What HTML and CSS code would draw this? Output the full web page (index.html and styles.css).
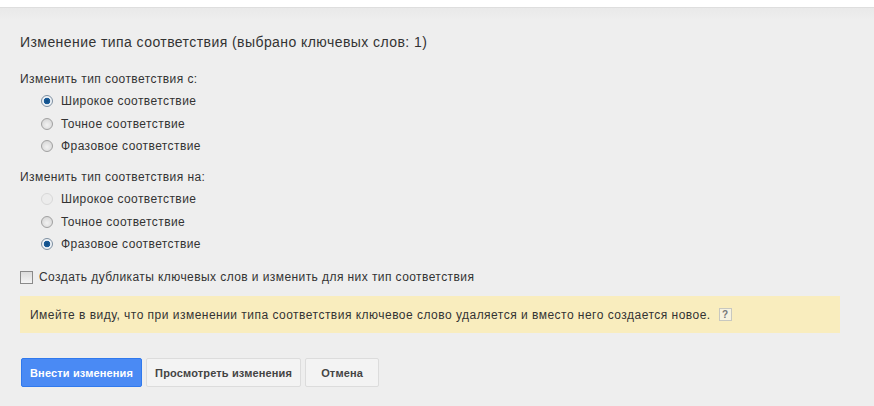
FILE: index.html
```html
<!DOCTYPE html>
<html>
  <head>
    <meta charset="utf-8">
    <title>Изменение типа соответствия</title>
    <link rel="stylesheet" href="styles.css">
  </head>
  <body>
    <div class="topbar"></div>
    <div class="panel">
      <h1 class="title">Изменение типа соответствия (выбрано ключевых слов: 1)</h1>

      <div class="group-label">Изменить тип соответствия с:</div>
      <div class="options">
        <label class="option"><span class="radio checked"></span>Широкое соответствие</label>
        <label class="option"><span class="radio"></span>Точное соответствие</label>
        <label class="option"><span class="radio"></span>Фразовое соответствие</label>
      </div>

      <div class="group-label">Изменить тип соответствия на:</div>
      <div class="options">
        <label class="option"><span class="radio disabled"></span>Широкое соответствие</label>
        <label class="option"><span class="radio"></span>Точное соответствие</label>
        <label class="option"><span class="radio checked"></span>Фразовое соответствие</label>
      </div>

      <label class="duplicate"><span class="checkbox"></span>Создать дубликаты ключевых слов и изменить для них тип соответствия</label>

      <div class="notice">Имейте в виду, что при изменении типа соответствия ключевое слово удаляется и вместо него создается новое.<span class="help">?</span></div>

      <div class="buttons">
        <button type="button" class="button primary">Внести изменения</button>
        <button type="button" class="button">Просмотреть изменения</button>
        <button type="button" class="button cancel">Отмена</button>
      </div>
    </div>
  </body>
</html>
```

FILE: styles.css
```css
html, body {
  margin: 0;
  height: 100%;
  overflow: hidden;
}

body {
  background: #fff;
  color: #333;
  font-family: "Liberation Sans", Arial, sans-serif;
  font-size: 12px;
  letter-spacing: 0.42px;
}

.topbar {
  height: 7px;
}

.panel {
  height: 399px;
  box-sizing: border-box;
  padding: 26px 34px 0 20px;
  background: linear-gradient(#e9e9e9, #eeeeee 12px);
  border-top: 1px solid #dedede;
}

.title {
  margin: 0 0 22px;
  font-size: 14px;
  font-weight: normal;
  line-height: 16px;
  color: #333;
  letter-spacing: 0.43px;
}

.group-label {
  line-height: 15px;
  margin-bottom: 3px;
}

.options {
  display: flex;
  flex-direction: column;
  margin-bottom: 12.5px;
}

.option {
  display: flex;
  align-items: center;
  height: 22.5px;
  padding-left: 21px;
}

.radio {
  width: 10px;
  height: 10px;
  margin-right: 8px;
  border: 1px solid #a0a0a0;
  border-radius: 50%;
  background: radial-gradient(circle at 50% 60%, #f2f2f2, #d0d0d0);
}

.radio.checked {
  border-color: #7d8fa0;
  background: radial-gradient(circle, #0f4a80 0, #1d5f9c 3px, #eef2f6 3.6px);
}

.radio.disabled {
  border-color: #d8d8d8;
  background: #ececec;
}

.duplicate {
  display: flex;
  align-items: center;
  height: 16px;
  margin-top: 13.5px;
}

.checkbox {
  width: 11px;
  height: 11px;
  margin-right: 6px;
  border: 1px solid #8a8a8a;
  background: linear-gradient(#dcdcdc, #f4f4f4);
}

.notice {
  display: flex;
  align-items: center;
  height: 37px;
  margin-top: 11px;
  padding-left: 10px;
  background: #f9edbe;
  color: #333;
  letter-spacing: 0.48px;
}

.help {
  width: 11px;
  height: 11px;
  margin-left: 8px;
  border: 1px solid #c8c8c0;
  background: #f6f2e0;
  color: #777;
  font-size: 10px;
  font-weight: bold;
  line-height: 11px;
  text-align: center;
  letter-spacing: 0;
}

.buttons {
  display: flex;
  gap: 4px;
  margin-top: 25px;
  margin-left: 1px;
}

.button {
  height: 29px;
  padding: 0 8px;
  border: 1px solid #dcdcdc;
  border-radius: 2px;
  background: #f3f3f3;
  color: #444;
  font-family: inherit;
  font-size: 11px;
  font-weight: bold;
  letter-spacing: 0.15px;
}

.button.primary {
  border-color: #3079ed;
  background: #4a8af4;
  color: #fff;
}

.button.cancel {
  width: 74px;
}
```
